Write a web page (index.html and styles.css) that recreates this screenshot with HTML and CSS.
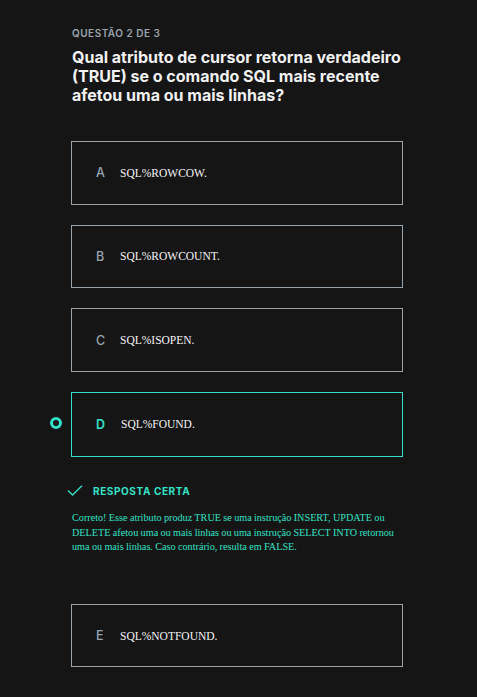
FILE: index.html
```html
<!DOCTYPE html>
<html lang="pt-BR">
<head>
<meta charset="utf-8">
<title>Questão 2 de 3</title>
<link rel="stylesheet" href="styles.css">
</head>
<body>
<main class="quiz">
  <p class="counter">QUESTÃO 2 DE 3</p>
  <h1 class="question">Qual atributo de cursor retorna verdadeiro (TRUE) se o comando SQL mais recente afetou uma ou mais linhas?</h1>

  <ul class="options">
    <li class="option"><span class="letter">A</span><span class="text">SQL%ROWCOW.</span></li>
    <li class="option"><span class="letter">B</span><span class="text">SQL%ROWCOUNT.</span></li>
    <li class="option"><span class="letter">C</span><span class="text">SQL%ISOPEN.</span></li>
    <li class="option selected"><span class="radio"></span><span class="letter">D</span><span class="text">SQL%FOUND.</span></li>
    <li class="feedback">
      <div class="feedback-head">
        <svg class="check" width="16" height="11" viewBox="0 0 16 11"><path d="M1 5.5 L5.5 10 L15 0.8" fill="none" stroke="currentColor" stroke-width="1.3"/></svg>
        <span>RESPOSTA CERTA</span>
      </div>
      <p class="feedback-text">Correto! Esse atributo produz TRUE se uma instrução INSERT, UPDATE ou DELETE afetou uma ou mais linhas ou uma instrução SELECT INTO retornou uma ou mais linhas. Caso contrário, resulta em FALSE.</p>
    </li>
    <li class="option"><span class="letter">E</span><span class="text">SQL%NOTFOUND.</span></li>
  </ul>
</main>
</body>
</html>
```

FILE: styles.css
```css
html, body {
  margin: 0;
  padding: 0;
  background: #151515;
}

body {
  min-height: 697px;
}

.quiz {
  width: 332px;
  margin-left: 71px;
  padding-top: 27px;
  font-family: "Inter", "Roboto", sans-serif;
}

.counter {
  margin: 0 0 0 1px;
  font-size: 10px;
  line-height: 12px;
  font-weight: 600;
  letter-spacing: 0.5px;
  color: #9aa4ac;
}

.question {
  margin: 9px 0 0 1px;
  font-size: 16px;
  line-height: 19px;
  font-weight: 700;
  color: #f2f2f2;
}

.options {
  list-style: none;
  margin: 36px 0 0 0;
  padding: 0;
  display: flex;
  flex-direction: column;
  gap: 20px;
}

.option {
  position: relative;
  height: 61.67px;
  border: 1px solid #98a3ab;
  display: flex;
  align-items: center;
  padding-left: 24px;
}

.option.selected {
  height: 63px;
  border-color: #33e2c6;
}

.letter {
  width: 24px;
  font-size: 12.5px;
  font-weight: 500;
  color: #98a6b2;
}

.selected .letter {
  color: #33e2c6;
  font-weight: 600;
  width: 25px;
}

.text {
  font-family: "Liberation Serif", serif;
  font-size: 11.5px;
  color: #f4f4f4;
}

.radio {
  position: absolute;
  left: -22px;
  top: 50%;
  width: 6px;
  height: 6px;
  margin-top: -7px;
  border: 3.5px solid #33e2c6;
  border-radius: 50%;
}

.feedback {
  padding: 8px 0 29px 0;
}

.feedback-head {
  display: flex;
  align-items: center;
  gap: 10px;
  margin-left: -4px;
  color: #33e2c6;
}

.feedback-head span {
  font-size: 10px;
  font-weight: 700;
  letter-spacing: 0.6px;
}

.feedback-text {
  width: 334px;
  margin: 14px 0 0 1px;
  font-family: "Liberation Serif", serif;
  font-size: 10.2px;
  line-height: 14.6px;
  word-spacing: -0.2px;
  color: #33e2c6;
}
```
